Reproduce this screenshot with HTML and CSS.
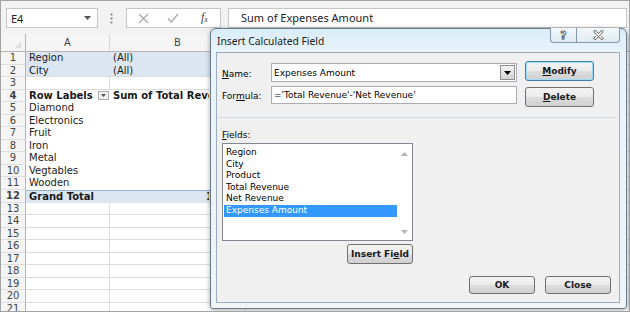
FILE: index.html
```html
<!DOCTYPE html>
<html>
<head>
  <title>Insert Calculated Field</title>
  <link rel="stylesheet" href="styles.css">
</head>
<body>
<div class="screen">

  <!-- formula bar -->
  <div class="fbar">
    <div class="namebox">
      <span>E4</span>
      <svg width="7" height="4" viewBox="0 0 7 4"><path d="M0 0H7L3.5 4Z" fill="#555"/></svg>
    </div>
    <svg class="dots" width="3" height="11" viewBox="0 0 3 11">
      <circle cx="1.5" cy="1.5" r="1.1" fill="#7a7a7a"/>
      <circle cx="1.5" cy="5.5" r="1.1" fill="#7a7a7a"/>
      <circle cx="1.5" cy="9.5" r="1.1" fill="#7a7a7a"/>
    </svg>
    <div class="fbtns">
      <svg class="ico-x" width="11" height="11" viewBox="0 0 11 11"><path d="M1 1L10 10M10 1L1 10" stroke="#a8a8a8" stroke-width="1.2"/></svg>
      <svg class="ico-ok" width="12" height="10" viewBox="0 0 12 10"><path d="M1 5.5L4.5 9L11 1" stroke="#a8a8a8" stroke-width="1.2" fill="none"/></svg>
      <span class="fx">f<sub>x</sub></span>
    </div>
    <div class="finput">Sum of Expenses Amount</div>
  </div>

  <!-- worksheet -->
  <div class="sheet">
    <div class="row colhead"><div class="corner"><i></i></div><div>A</div><div>B</div><div></div></div>
    <div class="row fill"><div class="rh">1</div><div class="c">Region</div><div class="c">(All)</div><div class="c g"></div></div>
    <div class="row fill last"><div class="rh">2</div><div class="c">City</div><div class="c">(All)</div><div class="c g"></div></div>
    <div class="row grid"><div class="rh">3</div><div class="c"></div><div class="c"></div><div class="c"></div></div>
    <div class="row pv bold"><div class="rh">4</div><div class="c">Row Labels <span class="filter"><svg width="5" height="3" viewBox="0 0 5 3"><path d="M0 0H5L2.5 3Z" fill="#555"/></svg></span></div><div class="c"><span class="clip">Sum of Total Revenue</span></div><div class="c g"></div></div>
    <div class="row pv"><div class="rh">5</div><div class="c">Diamond</div><div class="c"></div><div class="c g"></div></div>
    <div class="row pv"><div class="rh">6</div><div class="c">Electronics</div><div class="c"></div><div class="c g"></div></div>
    <div class="row pv"><div class="rh">7</div><div class="c">Fruit</div><div class="c"></div><div class="c g"></div></div>
    <div class="row pv"><div class="rh">8</div><div class="c">Iron</div><div class="c"></div><div class="c g"></div></div>
    <div class="row pv"><div class="rh">9</div><div class="c">Metal</div><div class="c"></div><div class="c g"></div></div>
    <div class="row pv"><div class="rh">10</div><div class="c">Vegtables</div><div class="c"></div><div class="c g"></div></div>
    <div class="row pv"><div class="rh">11</div><div class="c">Wooden</div><div class="c"></div><div class="c g"></div></div>
    <div class="row total bold"><div class="rh">12</div><div class="c">Grand Total</div><div class="c"><span class="clip num">184560</span></div><div class="c g"></div></div>
    <div class="row grid"><div class="rh">13</div><div class="c"></div><div class="c"></div><div class="c"></div></div>
    <div class="row grid"><div class="rh">14</div><div class="c"></div><div class="c"></div><div class="c"></div></div>
    <div class="row grid"><div class="rh">15</div><div class="c"></div><div class="c"></div><div class="c"></div></div>
    <div class="row grid"><div class="rh">16</div><div class="c"></div><div class="c"></div><div class="c"></div></div>
    <div class="row grid"><div class="rh">17</div><div class="c"></div><div class="c"></div><div class="c"></div></div>
    <div class="row grid"><div class="rh">18</div><div class="c"></div><div class="c"></div><div class="c"></div></div>
    <div class="row grid"><div class="rh">19</div><div class="c"></div><div class="c"></div><div class="c"></div></div>
    <div class="row grid"><div class="rh">20</div><div class="c"></div><div class="c"></div><div class="c"></div></div>
    <div class="row grid"><div class="rh">21</div><div class="c"></div><div class="c"></div><div class="c"></div></div>
  </div>

  <!-- dialog window -->
  <div class="dialog">
    <div class="titlebar">
      <span class="title">Insert Calculated Field</span>
      <div class="capbtns">
        <span class="cap help">?</span>
        <span class="cap close">
          <svg width="11" height="10" viewBox="0 0 11 10">
            <path d="M2 1.5L9 8.5M9 1.5L2 8.5" stroke="#6a6a6a" stroke-width="3" stroke-linecap="round"/>
            <path d="M2 1.5L9 8.5M9 1.5L2 8.5" stroke="#fff" stroke-width="1.2" stroke-linecap="round"/>
          </svg>
        </span>
      </div>
    </div>
    <div class="client">
      <div class="form">
        <label class="lbl-name"><u>N</u>ame:</label>
        <div class="combo">
          <span>Expenses Amount</span>
          <span class="dd"><svg width="7" height="4" viewBox="0 0 7 4"><path d="M0 0H7L3.5 4Z" fill="#000"/></svg></span>
        </div>
        <button class="btn focus"><u>M</u>odify</button>
        <label class="lbl-formula">For<u>m</u>ula:</label>
        <div class="input">='Total Revenue'-'Net Revenue'</div>
        <button class="btn del"><u>D</u>elete</button>
      </div>
      <div class="sep"></div>
      <div class="fields">
        <div class="flabel"><u>F</u>ields:</div>
        <div class="listbox">
          <ul>
            <li>Region</li>
            <li>City</li>
            <li>Product</li>
            <li>Total Revenue</li>
            <li>Net Revenue</li>
            <li class="sel">Expenses Amount</li>
          </ul>
          <div class="sb">
            <svg width="7" height="4" viewBox="0 0 7 4"><path d="M0 4H7L3.5 0Z" fill="#b4b4b4"/></svg>
            <svg width="7" height="4" viewBox="0 0 7 4"><path d="M0 0H7L3.5 4Z" fill="#b4b4b4"/></svg>
          </div>
        </div>
        <button class="btn ins">Insert Fi<u>e</u>ld</button>
      </div>
      <div class="actions">
        <button class="btn act">OK</button>
        <button class="btn act">Close</button>
      </div>
    </div>
  </div>

</div>
</body>
</html>
```

FILE: styles.css
```css
body {
  margin: 0;
}

.screen {
  position: relative;
  width: 630px;
  height: 312px;
  box-sizing: border-box;
  border: 1px solid #a3a3a3;
  overflow: hidden;
  background: #fff;
  font-family: "DejaVu Sans", Verdana, sans-serif;
}

/* formula bar */
.fbar {
  display: flex;
  align-items: flex-start;
  height: 33px;
  box-sizing: border-box;
  padding: 7px 0 0 5px;
  background: #f2f2f2;
}

.namebox {
  width: 92px;
  height: 20px;
  box-sizing: border-box;
  border: 1px solid #c6c6c6;
  background: #fff;
  display: flex;
  align-items: center;
  justify-content: space-between;
  padding: 0 6px 0 4px;
  font: 11px "Noto Sans", sans-serif;
  color: #222;
}

.dots {
  margin: 5px 0 0 12px;
}

.fbtns {
  margin-left: 13px;
  width: 95px;
  height: 20px;
  box-sizing: border-box;
  border: 1px solid #c6c6c6;
  background: #fff;
  display: flex;
  align-items: center;
}

.ico-x { margin-left: 11px; }
.ico-ok { margin-left: 18px; }

.fx {
  margin-left: 22px;
  font: italic 12px "Liberation Serif", serif;
  color: #444;
  line-height: 12px;
}

.fx sub {
  font-size: 8px;
  vertical-align: -1px;
}

.finput {
  flex: 1;
  margin: 0 2px 0 7px;
  height: 20px;
  box-sizing: border-box;
  border: 1px solid #c6c6c6;
  background: #fff;
  padding-left: 12px;
  font: 11px/18px "Noto Sans", sans-serif;
  color: #222;
}

/* worksheet */
.row {
  display: grid;
  grid-template-columns: 25px 84px 136px 1fr;
  height: 12.55px;
  font-size: 10px;
  line-height: 12px;
  color: #1a1a1a;
}

.row > div {
  box-sizing: border-box;
  white-space: nowrap;
  overflow: hidden;
}

.colhead {
  height: 17px;
  background: #f5f5f5;
  border-bottom: 1px solid #b4b4b4;
  color: #444;
  line-height: 17px;
  text-align: center;
}

.colhead > div {
  border-right: 1px solid #d6d6d6;
}

.colhead .corner {
  position: relative;
  border-right-color: #b4b4b4;
}

.corner i {
  position: absolute;
  right: 4px;
  bottom: 3px;
  border-left: 6px solid transparent;
  border-bottom: 6px solid #dcdcdc;
}

.rh {
  background: #f5f5f5;
  border-right: 1px solid #b4b4b4;
  border-bottom: 1px solid #dedede;
  color: #444;
  text-align: center;
}

.c {
  padding-left: 3px;
}

.c.g,
.grid .c {
  border-right: 1px solid #dadcdd;
  border-bottom: 1px solid #dadcdd;
}

/* the part of column B that shows left of the dialog */
.clip {
  display: block;
  width: 96px;
  overflow: hidden;
}

.clip.num {
  text-indent: 93px;
}

.fill .c:nth-child(2),
.fill .c:nth-child(3) {
  background: #dce6f1;
}

.fill.last .c:nth-child(2),
.fill.last .c:nth-child(3) {
  border-bottom: 1px solid #dadcdd;
}

.bold {
  font-weight: bold;
}

.pv .c:nth-child(2) {
  position: relative;
}

.filter {
  position: absolute;
  right: 1px;
  top: 1px;
  width: 11px;
  height: 9px;
  box-sizing: border-box;
  border: 1px solid #ababab;
  background: #f1f1f1;
  display: flex;
  align-items: center;
  justify-content: center;
}

.total .c:nth-child(2),
.total .c:nth-child(3) {
  background: #dce6f1;
  border-top: 1px solid #95b3d7;
}

/* dialog */
.dialog {
  position: absolute;
  left: 209px;
  top: 27px;
  width: 417px;
  height: 281px;
  box-sizing: border-box;
  border: 1px solid #6b7b8b;
  border-radius: 6px 6px 3px 3px;
  background: linear-gradient(180deg, #d9ecf8 0, #e9f4fb 24px, #eef4f8 100%);
  box-shadow: 0 1px 5px rgba(0, 0, 0, 0.35);
  padding: 0 6px 5px 5px;
  display: flex;
  flex-direction: column;
}

.titlebar {
  position: relative;
  height: 23px;
  display: flex;
  align-items: center;
  padding-left: 1px;
}

.title {
  font: 10.3px "Noto Sans", sans-serif;
  color: #1b1b1b;
}

.capbtns {
  position: absolute;
  top: -1px;
  right: 0;
  display: flex;
}

.cap {
  height: 15px;
  box-sizing: border-box;
  border: 1px solid #8797a7;
  border-top: none;
  background: linear-gradient(#f3f8fb, #dfeaf2);
  display: flex;
  align-items: center;
  justify-content: center;
}

.help {
  width: 26px;
  border-right: none;
  border-radius: 0 0 0 4px;
  font: bold 11px "DejaVu Sans", sans-serif;
  color: #fff;
  -webkit-text-stroke: 0.8px #555;
}

.close {
  width: 44px;
  border-radius: 0 0 4px 0;
}

.client {
  flex: 1;
  box-sizing: border-box;
  border: 1px solid #9eadbd;
  background: #f0f0f0;
  padding: 8px 8px 8px 5px;
  display: flex;
  flex-direction: column;
  font: 9px "DejaVu Sans", sans-serif;
  color: #000;
}

.form {
  display: grid;
  grid-template-columns: 41px 246px 69px;
  grid-template-rows: 25px 21px;
  column-gap: 8px;
}

.form label {
  line-height: 11px;
  white-space: nowrap;
}

.lbl-name { margin-top: 8px; }
.lbl-formula { margin-top: 5px; }

.combo,
.input {
  box-sizing: border-box;
  border: 1px solid #abadb3;
  background: #fff;
  padding-left: 2px;
}

.combo {
  margin-top: 2px;
  height: 19px;
  display: flex;
  align-items: center;
  justify-content: space-between;
  padding-right: 1px;
}

.input {
  height: 18px;
  line-height: 16px;
}

.dd {
  width: 15px;
  height: 15px;
  box-sizing: border-box;
  border: 1px solid #8e8f8f;
  background: linear-gradient(#f2f2f2, #d4d4d4);
  display: flex;
  align-items: center;
  justify-content: center;
}

.btn {
  box-sizing: border-box;
  border: 1px solid #707070;
  border-radius: 3px;
  background: linear-gradient(#f3f3f3 0%, #ebebeb 50%, #dddddd 51%, #cfcfcf 100%);
  font: bold 9px "DejaVu Sans", sans-serif;
  color: #1a1a1a;
  padding: 0;
  height: 20px;
}

.btn.focus {
  border-color: #3c7fb1;
  box-shadow: inset 0 0 0 1px #9ddcf7;
}

.btn.del {
  margin-top: 1px;
}

.sep {
  height: 1px;
  background: #d2d9df;
  margin: 10px -6px 0 -4px;
}

.fields {
  width: 191px;
  display: flex;
  flex-direction: column;
}

.flabel {
  margin-top: 12px;
  line-height: 11px;
}

.listbox {
  margin-top: 2px;
  height: 98px;
  box-sizing: border-box;
  border: 1px solid #828790;
  background: #fff;
  display: flex;
}

.listbox ul {
  flex: 1;
  list-style: none;
  margin: 0;
  padding: 3px 0 0 1px;
}

.listbox li {
  height: 11.6px;
  line-height: 11.6px;
  padding-left: 2px;
}

.listbox li.sel {
  background: #3399ff;
  color: #fff;
}

.sb {
  width: 15px;
  display: flex;
  flex-direction: column;
  justify-content: space-between;
  align-items: center;
  padding: 8px 0 6px;
}

.btn.ins {
  align-self: flex-end;
  margin-top: 3px;
  width: 66px;
}

.actions {
  margin-top: auto;
  display: flex;
  justify-content: flex-end;
  gap: 10px;
}

.btn.act {
  width: 66px;
  height: 18px;
}
```
